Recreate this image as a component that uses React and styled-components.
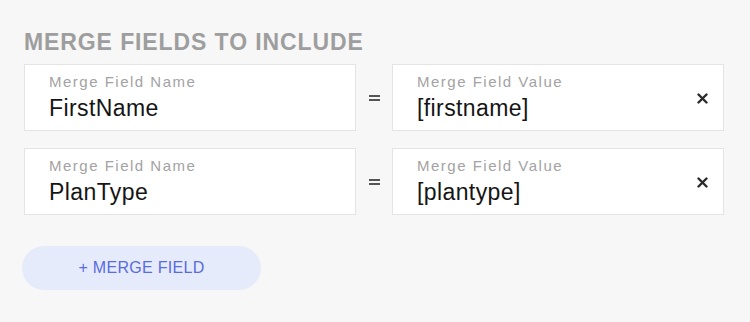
import React from "react";
import styled, { createGlobalStyle } from "styled-components";

const GlobalStyle = createGlobalStyle`
  body {
    margin: 0;
    background: #f7f7f7;
    font-family: "Liberation Sans", Arial, sans-serif;
  }
`;

const Page = styled.div`
  width: 750px;
  height: 322px;
  box-sizing: border-box;
  padding: 29px 26px 0 24px;
  background: #f7f7f7;
`;

const Heading = styled.h2`
  margin: 0 0 9px;
  font-size: 23px;
  line-height: 26px;
  font-weight: 700;
  letter-spacing: 0.9px;
  color: #9e9e9e;
`;

const Rows = styled.div`
  display: flex;
  flex-direction: column;
  gap: 17px;
`;

const Row = styled.div`
  display: grid;
  grid-template-columns: 332px 36px 332px;
  align-items: center;
`;

const Field = styled.div`
  position: relative;
  height: 67px;
  box-sizing: border-box;
  padding: 8px 24px 0;
  background: #fff;
  border: 1px solid #e4e4e4;
`;

const Label = styled.div`
  font-size: 15px;
  line-height: 18px;
  letter-spacing: 1.5px;
  color: #a3a3a3;
`;

const Value = styled.div`
  margin-top: 4px;
  font-size: 23px;
  line-height: 26px;
  letter-spacing: 0.4px;
  color: #151515;
`;

const Equals = styled.div`
  display: flex;
  flex-direction: column;
  align-items: center;
  gap: 2px;
  span {
    width: 11px;
    height: 2px;
    background: #555;
  }
`;

const Remove = styled.button`
  position: absolute;
  right: 10px;
  top: 22px;
  width: 22px;
  height: 22px;
  padding: 0;
  border: 0;
  background: none;
  display: flex;
  align-items: center;
  justify-content: center;
  cursor: pointer;
`;

const AddButton = styled.button`
  margin: 31px 0 0 -2px;
  width: 239px;
  height: 44px;
  border: 0;
  border-radius: 22px;
  background: #e5ebfa;
  color: #5a6be0;
  font-family: "Liberation Sans", Arial, sans-serif;
  font-size: 16px;
  letter-spacing: 0.3px;
  cursor: pointer;
`;

const fields = [
  { name: "FirstName", value: "[firstname]" },
  { name: "PlanType", value: "[plantype]" },
];

const App = () => {
  return (
    <Page>
      <GlobalStyle />
      <Heading>MERGE FIELDS TO INCLUDE</Heading>
      <Rows>
        {fields.map((f) => (
          <Row key={f.name}>
            <Field>
              <Label>Merge Field Name</Label>
              <Value>{f.name}</Value>
            </Field>
            <Equals>
              <span />
              <span />
            </Equals>
            <Field>
              <Label>Merge Field Value</Label>
              <Value>{f.value}</Value>
              <Remove aria-label="remove">
                <svg width="11" height="11" viewBox="0 0 11 11">
                  <path d="M1.5 1.5 L9.5 9.5 M9.5 1.5 L1.5 9.5" stroke="#2b2b2b" strokeWidth="2.4" strokeLinecap="round" />
                </svg>
              </Remove>
            </Field>
          </Row>
        ))}
      </Rows>
      <AddButton>+ MERGE FIELD</AddButton>
    </Page>
  );
};

export default App;
